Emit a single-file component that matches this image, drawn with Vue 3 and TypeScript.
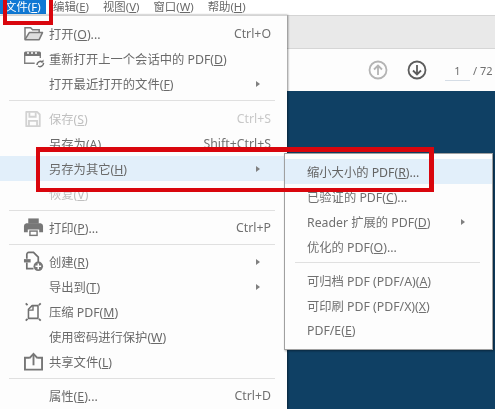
<script setup lang="ts">
interface Row {
  pre: string
  key: string
  post: string
  shortcut?: string
  icon?: string
  arrow?: boolean
  disabled?: boolean
  active?: boolean
  sep?: boolean
}

const topMenus = [
  { pre: '文件(', key: 'F', post: ')', on: true },
  { pre: '编辑(', key: 'E', post: ')', on: false },
  { pre: '视图(', key: 'V', post: ')', on: false },
  { pre: '窗口(', key: 'W', post: ')', on: false },
  { pre: '帮助(', key: 'H', post: ')', on: false },
]

const fileMenu: Row[] = [
  { pre: '打开(', key: 'O', post: ')...', shortcut: 'Ctrl+O', icon: 'open' },
  { pre: '重新打开上一个会话中的 PDF(', key: 'D', post: ')', icon: 'recent' },
  { pre: '打开最近打开的文件(', key: 'F', post: ')', arrow: true, sep: true },
  { pre: '保存(', key: 'S', post: ')', shortcut: 'Ctrl+S', icon: 'save', disabled: true },
  { pre: '另存为(', key: 'A', post: ')...', shortcut: 'Shift+Ctrl+S' },
  { pre: '另存为其它(', key: 'H', post: ')', arrow: true, active: true },
  { pre: '恢复(', key: 'V', post: ')', disabled: true, sep: true },
  { pre: '打印(', key: 'P', post: ')...', shortcut: 'Ctrl+P', icon: 'print', sep: true },
  { pre: '创建(', key: 'R', post: ')', icon: 'create', arrow: true },
  { pre: '导出到(', key: 'T', post: ')', arrow: true },
  { pre: '压缩 PDF(', key: 'M', post: ')', icon: 'compress' },
  { pre: '使用密码进行保护(', key: 'W', post: ')' },
  { pre: '共享文件(', key: 'L', post: ')', icon: 'share', sep: true },
  { pre: '属性(', key: 'E', post: ')...', shortcut: 'Ctrl+D' },
]

const saveAsMenu: Row[] = [
  { pre: '缩小大小的 PDF(', key: 'R', post: ')...', active: true },
  { pre: '已验证的 PDF(', key: 'C', post: ')...' },
  { pre: 'Reader 扩展的 PDF(', key: 'D', post: ')', arrow: true },
  { pre: '优化的 PDF(', key: 'O', post: ')...', sep: true },
  { pre: '可归档 PDF (PDF/A)(', key: 'A', post: ')' },
  { pre: '可印刷 PDF (PDF/X)(', key: 'X', post: ')' },
  { pre: 'PDF/E(', key: 'E', post: ')' },
]
</script>

<template>
  <div class="page">
    <div class="menubar">
      <span v-for="m in topMenus" :key="m.key" class="top-item" :class="{ on: m.on }">{{ m.pre }}<u>{{ m.key }}</u>{{ m.post }}</span>
    </div>

    <div class="main">
      <div class="file-menu">
        <template v-for="row in fileMenu" :key="row.pre">
          <div class="row" :class="{ disabled: row.disabled, active: row.active }">
            <span class="icon">
              <svg v-if="row.icon === 'open'" width="21" height="17" viewBox="0 0 22 18" fill="none" stroke="#7a7a7a" stroke-width="1.600">
                <path d="M2 15V3h6l2 2h7v3" />
                <path d="M2 15.500h15l3.500-7.500H6.500z" fill="#dedede" stroke-linejoin="round" />
              </svg>
              <svg v-else-if="row.icon === 'recent'" width="22" height="18" viewBox="0 0 22 18" fill="none">
                <path d="M1 3a1.500 1.500 0 0 1 1.500-1.500h14A1.500 1.500 0 0 1 18 3v3H1z" fill="#777" />
                <path d="M1.700 6v7.300h10M17.300 6v2" stroke="#808080" stroke-width="1.400" />
                <path d="M4 3h2M8 3h2M12 3h2" stroke="#fff" stroke-width="1.400" />
                <path d="M14 15a3.500 3.500 0 0 1 5.500-3M20.500 13a3.500 3.500 0 0 1-5.500 3" stroke="#707070" stroke-width="1.500" />
                <path d="M20.500 9.500v3h-3z" fill="#707070" />
              </svg>
              <svg v-else-if="row.icon === 'save'" class="narrow" width="18" height="18" viewBox="0 0 20 20" fill="none" stroke="#d2d2d2" stroke-width="2">
                <path d="M2.500 2h12l3 3v13h-15z" stroke-linejoin="round" />
                <path d="M6 2.500v5h7v-5M5.500 18v-6h9v6" />
              </svg>
              <svg v-else-if="row.icon === 'print'" width="21" height="21" viewBox="0 0 22 22">
                <path d="M5.500 1.500h11V7h-11z" fill="#777" />
                <path d="M3.500 6.500h15a3 3 0 0 1 2.500 3V16h-4v-3H5v3H1V9.500a3 3 0 0 1 2.500-3z" fill="#777" />
                <path d="M6.500 14h9v6h-9z" fill="#777" />
                <path d="M8 15.500h6v3H8z" fill="#fff" />
              </svg>
              <svg v-else-if="row.icon === 'create'" width="21" height="21" viewBox="0 0 22 22" fill="none">
                <path d="M4 8V3.500a2 2 0 0 1 2-2h5l5 5v5" stroke="#707070" stroke-width="1.800" />
                <path d="M1 8.500h7v3.500H1z" fill="#777" />
                <path d="M4 12v6.500h7" stroke="#707070" stroke-width="1.800" />
                <circle cx="16" cy="16" r="5" fill="#777" />
                <path d="M16 13v6M13 16h6" stroke="#fff" stroke-width="1.500" />
              </svg>
              <svg v-else-if="row.icon === 'compress'" width="20" height="20" viewBox="0 0 22 22" fill="none">
                <path d="M6 18V8l4-4h6.500v14z" stroke="#707070" stroke-width="1.700" stroke-linejoin="round" />
                <path d="M6 9h5V4.500" stroke="#707070" stroke-width="1.500" />
                <path d="M3 1.500l2 2M19.500 1.500l-2 2M3 20.500l2-2M19.500 20.500l-2-2" stroke="#707070" stroke-width="2" />
              </svg>
              <svg v-else-if="row.icon === 'share'" width="21" height="19" viewBox="0 0 22 20" fill="none" stroke="#777" stroke-width="2">
                <path d="M7 6H2v12.500h18V6h-5" />
                <path d="M11 14V2.500" />
                <path d="M6.800 6.500L11 2l4.200 4.500" />
              </svg>
            </span>
            <span class="label">{{ row.pre }}<u>{{ row.key }}</u>{{ row.post }}</span>
            <span v-if="row.shortcut" class="shortcut">{{ row.shortcut }}</span>
            <span v-if="row.arrow" class="arrow"></span>
          </div>
          <hr v-if="row.sep" class="sep" />
        </template>
      </div>

      <div class="document">
        <div class="tabstrip"></div>
        <div class="toolbar">
          <svg class="nav" width="20" height="20" viewBox="0 0 20 20" fill="none" stroke="#b4b4b4" stroke-width="1.800">
            <circle cx="10" cy="10" r="8.500" />
            <path d="M10 15V5.500M6 9.500l4-4 4 4" />
          </svg>
          <svg class="nav second" width="20" height="20" viewBox="0 0 20 20" fill="none" stroke="#5c5c5c" stroke-width="1.800">
            <circle cx="10" cy="10" r="8.500" />
            <path d="M10 5v9.500M6 10.500l4 4 4-4" />
          </svg>
          <span class="page-input">1</span>
          <span class="page-total">/ 72</span>
        </div>
        <div class="canvas"></div>
      </div>
    </div>

    <!-- submenu sits over the file menu and the document -->
    <div class="submenu">
      <template v-for="row in saveAsMenu" :key="row.pre">
        <div class="sub-row" :class="{ active: row.active }">
          <span class="label">{{ row.pre }}<u>{{ row.key }}</u>{{ row.post }}</span>
          <span v-if="row.arrow" class="arrow sub-arrow"></span>
        </div>
        <hr v-if="row.sep" class="sub-sep" />
      </template>
    </div>

    <!-- red annotation frames -->
    <div class="mark mark-file"></div>
    <div class="mark mark-saveas"></div>
  </div>
</template>

<style scoped>
.page {
  position: relative;
  width: 495px;
  height: 409px;
  overflow: hidden;
  background: #fdfdfd;
  font-family: "Noto Sans", "Noto Sans CJK SC", sans-serif;
  font-size: 12.3px;
  color: #6a6a6a;
  filter: blur(0.35px);
}

.menubar {
  display: flex;
  height: 15px;
  background: #fff;
  font-size: 11.4px;
  line-height: 14px;
}

.top-item {
  padding: 0 4px 0 3px;
  margin-right: 7px;
  height: 14px;
  white-space: nowrap;
}

.top-item.on {
  padding: 0 6px 0 5px;
  margin-right: 4px;
  width: 46px;
  box-sizing: border-box;
  background: #0f78d4;
  color: #fff;
}

.main {
  display: flex;
  height: 394px;
}

.file-menu {
  width: 287px;
  flex: none;
  box-sizing: border-box;
  padding-top: 5px;
  background: #fdfdfd;
  border-top: 1px solid #d4d4d4;
  box-shadow: 1px 0 2px rgba(0, 0, 0, 0.45);
  position: relative;
  z-index: 1;
}

.row {
  display: flex;
  align-items: center;
  height: 25px;
  padding-right: 16px;
  white-space: nowrap;
}

.row.active {
  background: #e2effa;
}

.row.disabled {
  color: #c0c0c0;
}

.icon {
  width: 26px;
  margin-left: 23px;
  flex: none;
  display: flex;
  align-items: center;
}

.icon .narrow {
  margin-left: 1px;
}

.label {
  flex: 1;
  white-space: nowrap;
}

.shortcut {
  color: #707070;
}

.row.disabled .shortcut {
  color: #c8c8c8;
}

.arrow {
  width: 0;
  height: 0;
  border-left: 4px solid #808080;
  border-top: 3px solid transparent;
  border-bottom: 3px solid transparent;
  margin-right: 11px;
}

.sep {
  margin: 4px 12px 4px 9px;
  border: 0;
  height: 1px;
  background: #e0e0e0;
}

.sep:first-of-type {
  margin-bottom: 5px;
}

.document {
  flex: 1;
  display: flex;
  flex-direction: column;
}

.tabstrip {
  height: 32px;
  flex: none;
  background: #e9e9e9;
  border-top: 1px solid #d4d4d4;
  border-bottom: 1px solid #d6d6d6;
}

.toolbar {
  height: 42px;
  flex: none;
  display: flex;
  align-items: center;
  padding-left: 81px;
  background: #fdfdfd;
  font-size: 11px;
  color: #707070;
}

.nav.second {
  margin-left: 19px;
}

.page-input {
  width: 25px;
  margin-left: 18px;
  padding: 3px 0 2px;
  text-align: center;
  border-bottom: 1px solid #d5dde6;
}

.page-total {
  margin-left: 3px;
  white-space: nowrap;
}

.canvas {
  flex: 1;
  background: #0f4064;
}

.submenu {
  position: absolute;
  left: 284px;
  top: 153px;
  width: 209px;
  height: 197px;
  box-sizing: border-box;
  padding-top: 5px;
  background: #fdfdfd;
  border: 1px solid #a0a0a0;
  box-shadow: 1px 1px 2px rgba(0, 0, 0, 0.4);
  z-index: 2;
}

.sub-row {
  display: flex;
  align-items: center;
  height: 25px;
  padding-left: 22px;
  color: #707070;
  white-space: nowrap;
}

.sub-row.active {
  background: #e2effa;
  color: #646464;
}

.sub-arrow {
  margin-right: 27px;
}

.sub-sep {
  margin: 3px 12px 5px 10px;
  border: 0;
  height: 1px;
  background: #e0e0e0;
}

.mark {
  position: absolute;
  box-sizing: border-box;
  border: 4px solid #d9060d;
  z-index: 3;
}

.mark-file {
  left: 3px;
  top: -4px;
  width: 50px;
  height: 29px;
}

.mark-saveas {
  left: 36px;
  top: 147px;
  width: 398px;
  height: 45px;
  border-width: 5px 5px 4px 4px;
}
</style>

<style>
body {
  overflow: hidden;
}
</style>
